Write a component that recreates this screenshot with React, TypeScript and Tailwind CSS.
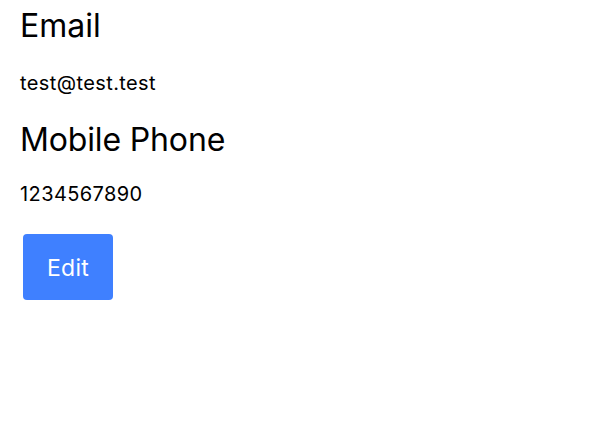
export default function App() {
  return (
    <div className="w-[615px] h-[430px] bg-white px-5 pt-[6px] text-black" style={{ fontFamily: "Inter, sans-serif" }}>
      <h2 className="text-[32px] leading-[40px]">Email</h2>
      <p className="text-[20px] leading-[28px] tracking-[0.4px] mt-[23px]">test@test.test</p>
      <h2 className="text-[32px] leading-[40px] tracking-[-0.15px] mt-[23px]">Mobile Phone</h2>
      <p className="text-[20px] leading-[28px] tracking-[0.4px] mt-[20px]">1234567890</p>
      <button className="block mt-[26px] ml-[3px] w-[90px] h-[66px] pt-[2px] rounded-[4px] bg-[#3f80ff] text-white text-[23px] tracking-[0.3px]">Edit</button>
    </div>
  );
}
